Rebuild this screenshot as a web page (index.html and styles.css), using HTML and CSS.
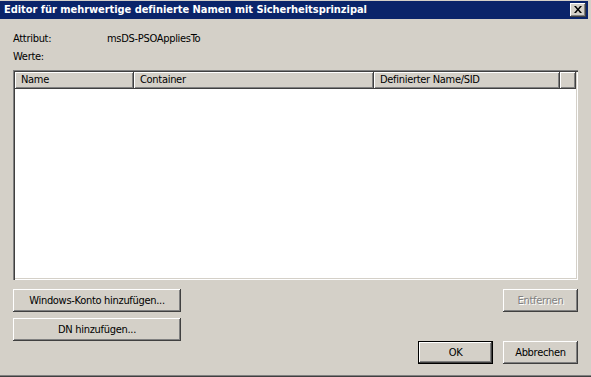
FILE: index.html
```html
<!DOCTYPE html>
<html>
<head>
<meta charset="utf-8">
<link rel="stylesheet" href="styles.css">
</head>
<body>
<div class="window">
  <div class="titlebar">
    <span class="title">Editor für mehrwertige definierte Namen mit Sicherheitsprinzipal</span>
    <span class="close"><svg width="8" height="7" viewBox="0 0 8 7"><path d="M0 0h2l2 2.5L6 0h2L5 3.5 8 7H6L4 4.5 2 7H0l3-3.5z" fill="#000"/></svg></span>
  </div>
  <div class="content">
    <div class="attr"><span class="attr-label">Attribut:</span><span>msDS-PSOAppliesTo</span></div>
    <div class="werte">Werte:</div>
    <div class="list">
      <div class="header">
        <div class="hcell c1">Name</div>
        <div class="hcell c2">Container</div>
        <div class="hcell c3">Definierter Name/SID</div>
        <div class="hcell c4"></div>
      </div>
    </div>
    <div class="actions">
      <div class="col-left">
        <button class="btn wide">Windows-Konto hinzufügen...</button>
        <button class="btn wide">DN hinzufügen...</button>
      </div>
      <div class="col-right">
        <button class="btn disabled">Entfernen</button>
        <div class="okrow">
          <button class="btn default">OK</button>
          <button class="btn">Abbrechen</button>
        </div>
      </div>
    </div>
  </div>
</div>
</body>
</html>
```
FILE: styles.css
```css
html, body {
  margin: 0;
  padding: 0;
  background: #d4d0c8;
}
.window {
  width: 591px;
  height: 377px;
  box-sizing: border-box;
  background: #d4d0c8;
  padding-top: 1px;
  box-shadow: inset 0 -1px #404040, inset 0 -2px #808080;
  font-family: "DejaVu Sans Condensed", "DejaVu Sans", sans-serif;
  font-size: 11px;
  letter-spacing: -0.3px;
  color: #000;
}
.titlebar {
  height: 18px;
  margin-right: 3px;
  background: #0a246a;
  display: flex;
  align-items: center;
  justify-content: space-between;
  padding-left: 4px;
  padding-right: 2px;
}
.title {
  color: #fff;
  font-weight: bold;
  letter-spacing: -0.05px;
  line-height: 18px;
}
.close {
  width: 16px;
  height: 14px;
  box-sizing: border-box;
  background: #d4d0c8;
  box-shadow: inset -1px -1px #404040, inset 1px 1px #fff, inset -2px -2px #808080;
  display: flex;
  align-items: center;
  justify-content: center;
  padding-bottom: 1px;
}
.close svg { display: block; }
.content {
  padding: 13px 13px 0 13px;
}
.attr {
  display: flex;
  line-height: 13px;
}
.attr-label {
  width: 94px;
}
.werte {
  line-height: 13px;
  margin-top: 5px;
}
.list {
  margin-top: 7px;
  height: 210px;
  box-sizing: border-box;
  padding: 2px;
  background: #fff;
  box-shadow: inset 1px 1px #808080, inset 2px 2px #404040, inset -1px -1px #fff, inset -2px -2px #d4d0c8;
}
.header {
  display: flex;
  height: 17px;
}
.hcell {
  box-sizing: border-box;
  background: #d4d0c8;
  box-shadow: inset -1px -1px #404040, inset 1px 1px #fff, inset -2px -2px #808080;
  line-height: 16px;
  padding-left: 6px;
  white-space: nowrap;
}
.c1 { width: 119px; }
.c2 { width: 240px; }
.c3 { width: 186px; }
.c4 { flex: 1; }
.actions {
  display: flex;
  justify-content: space-between;
  margin-top: 9px;
}
.col-left {
  display: flex;
  flex-direction: column;
  gap: 6px;
}
.col-right {
  display: flex;
  flex-direction: column;
  align-items: flex-end;
}
.okrow {
  display: flex;
  gap: 10px;
  margin-top: 29px;
}
.btn {
  font: inherit;
  letter-spacing: inherit;
  color: #000;
  width: 75px;
  height: 23px;
  box-sizing: border-box;
  border: none;
  padding: 0;
  margin: 0;
  background: #d4d0c8;
  box-shadow: inset -1px -1px #404040, inset 1px 1px #fff, inset -2px -2px #808080, inset 2px 2px #d4d0c8;
}
.btn.wide { width: 168px; }
.btn.disabled {
  color: #808080;
  text-shadow: 1px 1px #fff;
}
.btn.default {
  box-shadow: inset 0 0 0 1px #000, inset -2px -2px #404040, inset 2px 2px #fff, inset -3px -3px #808080;
}
```
